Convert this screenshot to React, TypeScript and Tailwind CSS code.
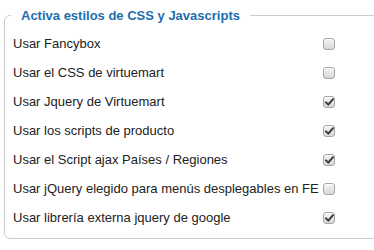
import React from "react";

const rows: { label: string; checked: boolean }[] = [
  { label: "Usar Fancybox", checked: false },
  { label: "Usar el CSS de virtuemart", checked: false },
  { label: "Usar Jquery de Virtuemart", checked: true },
  { label: "Usar los scripts de producto", checked: true },
  { label: "Usar el Script ajax Países / Regiones", checked: true },
  { label: "Usar jQuery elegido para menús desplegables en FE", checked: false },
  { label: "Usar librería externa jquery de google", checked: true },
];

function Check({ checked }: { checked: boolean }) {
  return (
    <span className="flex h-[12px] w-[12px] items-center justify-center rounded-[3px] border border-[#a6a6a6] bg-gradient-to-b from-[#f4f4f4] to-[#d8d8d8] shadow-[inset_0_1px_0_#fff]">
      {checked && (
        <svg width="9" height="8" viewBox="0 0 9 8">
          <path d="M1 4.4 L3.3 6.6 L8 1.2" fill="none" stroke="#3a3a3a" strokeWidth="2" strokeLinecap="round" strokeLinejoin="round" />
        </svg>
      )}
    </span>
  );
}

export default function App() {
  return (
    <div className="h-[250px] w-[374px] overflow-hidden bg-white pl-[4px] pt-[8px] font-['Liberation_Sans',Arial,sans-serif]">
      <fieldset className="m-0 h-[231px] w-[390px] rounded-[6px] border border-[#cccccc] px-[8px] pb-0 pt-0">
        <legend className="-ml-[2px] px-[10px] text-[13px] font-bold leading-[15px] text-[#1e6eae]">
          Activa estilos de CSS y Javascripts
        </legend>
        <div className="flex flex-col pt-[6px]">
          {rows.map((r) => (
            <label key={r.label} className="flex h-[29px] items-center">
              <span className="w-[310px] whitespace-nowrap text-[13px] text-[#222]">{r.label}</span>
              <Check checked={r.checked} />
            </label>
          ))}
        </div>
      </fieldset>
    </div>
  );
}
